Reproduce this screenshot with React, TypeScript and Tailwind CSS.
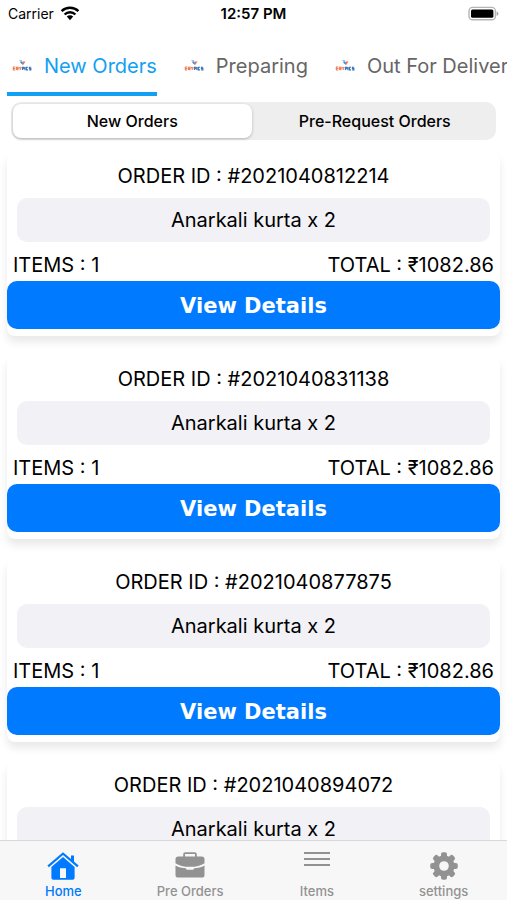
import { useState, type ReactNode } from "react";

const orders = [
  { id: "2021040812214", item: "Anarkali kurta x 2", count: 1, total: "1082.86" },
  { id: "2021040831138", item: "Anarkali kurta x 2", count: 1, total: "1082.86" },
  { id: "2021040877875", item: "Anarkali kurta x 2", count: 1, total: "1082.86" },
  { id: "2021040894072", item: "Anarkali kurta x 2", count: 1, total: "1082.86" },
];

const stages = ["New Orders", "Preparing", "Out For Delivery"];
const segments = ["New Orders", "Pre-Request Orders"];

function BrandMark() {
  return (
    <svg className="h-3 w-5 shrink-0" viewBox="0 0 20 12" aria-hidden="true">
      <path d="M7 .5l3-.3-.6 2z" fill="#4aa8e8" />
      <path d="M8 2.4l2.6-1 .4 3.600z" fill="#3c7fc9" />
      <path d="M10.800 1.400h2.700l-2.400 3.600z" fill="#f0714a" />
      <path
        d="M1 7h2.200M1 8.500h2M1 10h2.200M1.300 7v3M4.400 10V7.200h1.700v1.400H4.600l1.700 1.500M7.200 7l1 1.500L9.200 7M8.200 8.500V10"
        stroke="#f07c58"
        strokeWidth="1.100"
        fill="none"
      />
      <path
        d="M10.400 10V7.200h1.400v1.500h-1.300M13 7v3.200M16 7.200h-1.600v2.700H16M19.200 7.200h-1.800v1.400h1.500v1.400h-1.800"
        stroke="#3973b8"
        strokeWidth="1.100"
        fill="none"
      />
    </svg>
  );
}

function StatusBar() {
  return (
    <div className="grid h-7 shrink-0 grid-cols-3 items-center px-2 text-sm text-black">
      <div className="flex items-center gap-1.5">
        <span>Carrier</span>
        <svg className="h-4 w-5" viewBox="0 0 20 16" aria-label="Wi-Fi">
          <g fill="none" stroke="#000" strokeWidth="2.4">
            <path d="M1.6 5.2a12 12 0 0 1 16.8 0" />
            <path d="M4.6 8.5a7.700 7.700 0 0 1 10.800 0" />
          </g>
          <path d="M6.800 10.600a4.600 4.600 0 0 1 6.400 0L10 14.200z" />
        </svg>
      </div>
      <span className="text-center text-[15px] font-semibold">12:57 PM</span>
      <svg className="h-4 w-8 justify-self-end" viewBox="0 0 32 16" aria-label="Battery full">
        <rect x="2" y="1.400" width="26.400" height="12.400" rx="3.600" fill="#fff" stroke="#b5b5b5" strokeWidth="1.400" />
        <rect x="4" y="3.400" width="22.400" height="8.400" rx="1.600" fill="#000" />
        <path d="M29.600 5.400c2.400.7 2.400 3.700 0 4.400z" fill="#a5a5a5" />
      </svg>
    </div>
  );
}

function OrderCard({ order }: { order: (typeof orders)[number] }) {
  return (
    <article className="rounded-lg bg-white pb-[7px] text-center text-xl leading-6 text-black shadow-[0_6px_8px_rgba(0,0,0,0.09)]">
      <h2 className="pt-[11px] pb-2.5">ORDER ID : #{order.id}</h2>
      <p className="mx-2.5 rounded-[10px] bg-[#f1f1f6] py-2.5">{order.item}</p>
      <div className="flex justify-between px-1.5 pt-[11px] pb-1">
        <span>ITEMS : {order.count}</span>
        <span>TOTAL : ₹{order.total}</span>
      </div>
      <button
        type="button"
        className="block h-12 w-full rounded-[10px] bg-[#007aff] pt-0.5 font-['DejaVu_Sans',sans-serif] text-[21px] font-bold text-white"
      >
        View Details
      </button>
    </article>
  );
}

function HomeIcon() {
  return (
    <svg className="h-8 w-8" viewBox="0 0 32 32" fill="currentColor" aria-hidden="true">
      <path d="M16 1.200L24 8V4.600h3v6l4.600 4-1.400 1.600L16 4 1.800 16.200.4 14.600z" />
      <path d="M16 6l11.600 10v10.800c0 1.200-.8 2-2 2H6.400c-1.200 0-2-.8-2-2V16zM13 17.200v9.800h6v-9.800z" fillRule="evenodd" />
    </svg>
  );
}

function BriefcaseIcon() {
  return (
    <svg className="h-8 w-8" viewBox="0 0 32 32" fill="currentColor" aria-hidden="true">
      <path d="M9.200 5.600V3.400c0-1.300.9-2.200 2.200-2.200h9.200c1.300 0 2.200.9 2.200 2.200v2.200h5c1.700 0 2.700 1 2.700 2.700v4c-3 2.100-6.400 3-10.200 3.500h-8.600c-3.800-.5-7.200-1.400-10.200-3.500v-4c0-1.700 1-2.700 2.700-2.700zM11 5.600h10V3H11z" fillRule="evenodd" />
      <path d="M1.500 14.600c3 1.800 6.600 2.500 10.300 2.700.4 1.100 1.100 1.500 2.200 1.500h4c1.100 0 1.800-.4 2.200-1.500 3.700-.2 7.300-.9 10.300-2.700v9.300c0 1.700-1 2.700-2.700 2.700H4.200c-1.700 0-2.700-1-2.700-2.700z" />
    </svg>
  );
}

function LinesIcon() {
  return (
    <svg className="h-8 w-8" viewBox="0 0 32 32" fill="none" stroke="currentColor" strokeWidth="1.800" aria-hidden="true">
      <path d="M3 2h26M3 8h26M3 14h26" />
    </svg>
  );
}

function GearIcon() {
  return (
    <svg className="h-8 w-8" viewBox="0 0 32 32" aria-hidden="true">
      <g fill="currentColor" transform="translate(16 15)">
        {[0, 45, 90, 135].map((angle) => (
          <rect key={angle} x="-3" y="-13.800" width="6" height="27.600" rx="2" transform={`rotate(${angle})`} />
        ))}
        <circle r="10.600" />
      </g>
      <circle cx="16" cy="15" r="4.800" fill="#f7f7f7" />
    </svg>
  );
}

const tabs: { label: string; icon: ReactNode }[] = [
  { label: "Home", icon: <HomeIcon /> },
  { label: "Pre Orders", icon: <BriefcaseIcon /> },
  { label: "Items", icon: <LinesIcon /> },
  { label: "settings", icon: <GearIcon /> },
];

export default function App() {
  const [stage, setStage] = useState(0);
  const [segment, setSegment] = useState(0);
  const [tab, setTab] = useState(0);

  return (
    <div className="flex h-screen flex-col overflow-hidden bg-white font-[Inter,'Liberation_Sans',sans-serif]">
      <StatusBar />
      <nav className="flex h-17 shrink-0 gap-[22px] overflow-hidden pl-[7px]" aria-label="Order stages">
        {stages.map((name, i) => (
          <button
            key={name}
            type="button"
            onClick={() => setStage(i)}
            className={`flex shrink-0 items-center gap-3 border-b-4 pt-3 pl-[5px] text-xl whitespace-nowrap ${
              stage === i ? "border-[#12a0f5] text-[#12a0f5]" : "border-transparent text-[#666666]"
            }`}
          >
            <BrandMark />
            {name}
          </button>
        ))}
      </nav>
      <div className="mx-[11px] mt-1.5 flex h-[38px] shrink-0 gap-1 rounded-[10px] bg-[#eeeeee] p-0.5">
        {segments.map((name, i) => (
          <button
            key={name}
            type="button"
            onClick={() => setSegment(i)}
            className={`flex-1 rounded-lg text-base font-medium text-black ${
              segment === i ? "bg-white shadow-[0_1px_3px_rgba(0,0,0,0.25)]" : ""
            }`}
          >
            {name}
          </button>
        ))}
      </div>
      <main className="flex min-h-0 flex-1 flex-col gap-5 overflow-hidden px-[7px] pt-[13px]">
        {orders.map((order) => (
          <OrderCard key={order.id} order={order} />
        ))}
      </main>
      <nav className="grid h-15 shrink-0 grid-cols-4 border-t border-[#d8d8d8] bg-[#f7f7f7]" aria-label="Main">
        {tabs.map(({ label, icon }, i) => (
          <button
            key={label}
            type="button"
            onClick={() => setTab(i)}
            className={`flex flex-col items-center pt-2.5 text-[13px] leading-4 font-medium ${
              tab === i ? "text-[#007aff]" : "text-[#929292]"
            }`}
          >
            {icon}
            {label}
          </button>
        ))}
      </nav>
    </div>
  );
}
